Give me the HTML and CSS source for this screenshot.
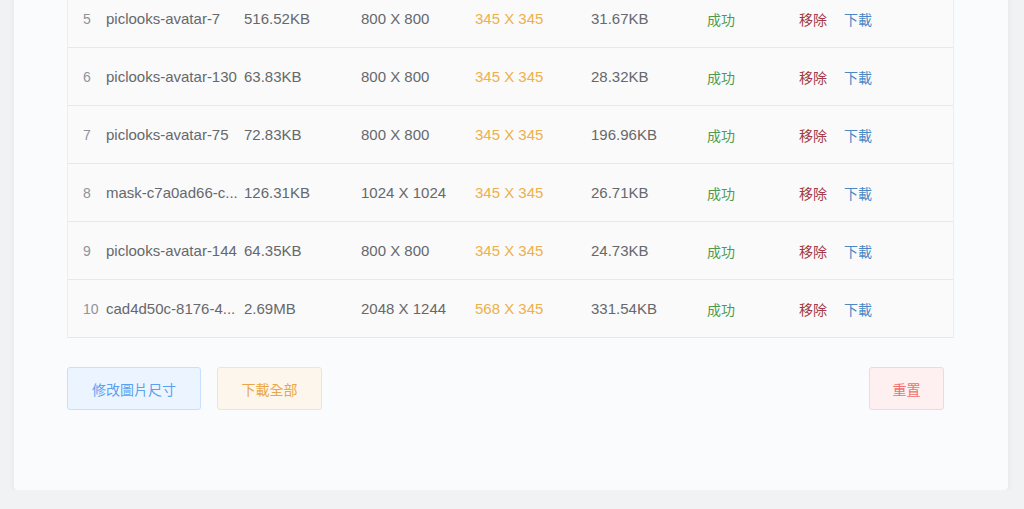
FILE: index.html
```html
<!DOCTYPE html>
<html lang="zh-Hant">
<head>
    <meta charset="UTF-8">
    <title>圖片尺寸</title>
    <link rel="stylesheet" href="styles.css">
</head>
<body>

<div class="card">
    <div class="table">
        <div class="row">
            <span class="idx">5</span>
            <span class="name">piclooks-avatar-7</span>
            <span>516.52KB</span>
            <span>800 X 800</span>
            <span class="new">345 X 345</span>
            <span>31.67KB</span>
            <span class="ok">成功</span>
            <span class="ops"><a class="remove">移除</a><a class="down">下載</a></span>
        </div>
        <div class="row">
            <span class="idx">6</span>
            <span class="name">piclooks-avatar-130</span>
            <span>63.83KB</span>
            <span>800 X 800</span>
            <span class="new">345 X 345</span>
            <span>28.32KB</span>
            <span class="ok">成功</span>
            <span class="ops"><a class="remove">移除</a><a class="down">下載</a></span>
        </div>
        <div class="row">
            <span class="idx">7</span>
            <span class="name">piclooks-avatar-75</span>
            <span>72.83KB</span>
            <span>800 X 800</span>
            <span class="new">345 X 345</span>
            <span>196.96KB</span>
            <span class="ok">成功</span>
            <span class="ops"><a class="remove">移除</a><a class="down">下載</a></span>
        </div>
        <div class="row">
            <span class="idx">8</span>
            <span class="name">mask-c7a0ad66-c...</span>
            <span>126.31KB</span>
            <span>1024 X 1024</span>
            <span class="new">345 X 345</span>
            <span>26.71KB</span>
            <span class="ok">成功</span>
            <span class="ops"><a class="remove">移除</a><a class="down">下載</a></span>
        </div>
        <div class="row">
            <span class="idx">9</span>
            <span class="name">piclooks-avatar-144</span>
            <span>64.35KB</span>
            <span>800 X 800</span>
            <span class="new">345 X 345</span>
            <span>24.73KB</span>
            <span class="ok">成功</span>
            <span class="ops"><a class="remove">移除</a><a class="down">下載</a></span>
        </div>
        <div class="row">
            <span class="idx">10</span>
            <span class="name">cad4d50c-8176-4...</span>
            <span>2.69MB</span>
            <span>2048 X 1244</span>
            <span class="new">568 X 345</span>
            <span>331.54KB</span>
            <span class="ok">成功</span>
            <span class="ops"><a class="remove">移除</a><a class="down">下載</a></span>
        </div>
    </div>

    <div class="actions">
        <button class="btn btn-blue">修改圖片尺寸</button>
        <button class="btn btn-orange">下載全部</button>
        <span class="spacer"></span>
        <button class="btn btn-red">重置</button>
    </div>
</div>

</body>
</html>
```

FILE: styles.css
```css
body {
    margin: 0;
    background: #f1f2f3;
    font-family: "Liberation Sans", Arial, "Noto Sans CJK TC", sans-serif;
    font-size: 15px;
    color: #66686c;
    overflow: hidden;
}

.card {
    margin: -10px 16px 0 14px;
    padding: 0 54px 80px 53px;
    background: #fafbfc;
    border-radius: 0 0 4px 4px;
    box-shadow: 0 2px 6px rgba(0, 0, 0, 0.06);
}

.table {
    border: 1px solid #ebeef5;
    border-top: none;
    border-bottom: none;
    background: #fafafa;
}

.row {
    display: grid;
    grid-template-columns: 23px 138px 117px 114px 116px 116px 92px auto;
    align-items: center;
    box-sizing: border-box;
    height: 58px;
    padding-left: 15px;
    border-bottom: 1px solid #e6e8ed;
    white-space: nowrap;
}

.idx {
    color: #909399;
    font-size: 14px;
}

.name {
    overflow: hidden;
    padding-right: 4px;
}

.new {
    color: #eeb049;
}

.ok {
    color: #4f9a4f;
    font-size: 14px;
}

.ops {
    display: flex;
    gap: 17px;
    font-size: 14px;
}

.remove {
    color: #a33a44;
}

.down {
    color: #4a88c6;
}

.actions {
    display: flex;
    gap: 16px;
    margin-top: 29px;
    padding-right: 10px;
}

.spacer {
    flex: 1;
}

.btn {
    height: 43px;
    padding: 0 21px;
    border-radius: 3px;
    font-family: inherit;
    font-size: 14px;
    cursor: pointer;
}

.btn-blue {
    width: 134px;
    background: #ecf5ff;
    border: 1px solid #c6e1ff;
    color: #5aa2f0;
}

.btn-orange {
    width: 105px;
    background: #fdf6ec;
    border: 1px solid #f8e3c5;
    color: #e8a848;
}

.btn-red {
    width: 75px;
    background: #fef0f0;
    border: 1px solid #fbd4d4;
    color: #f07070;
}
```
